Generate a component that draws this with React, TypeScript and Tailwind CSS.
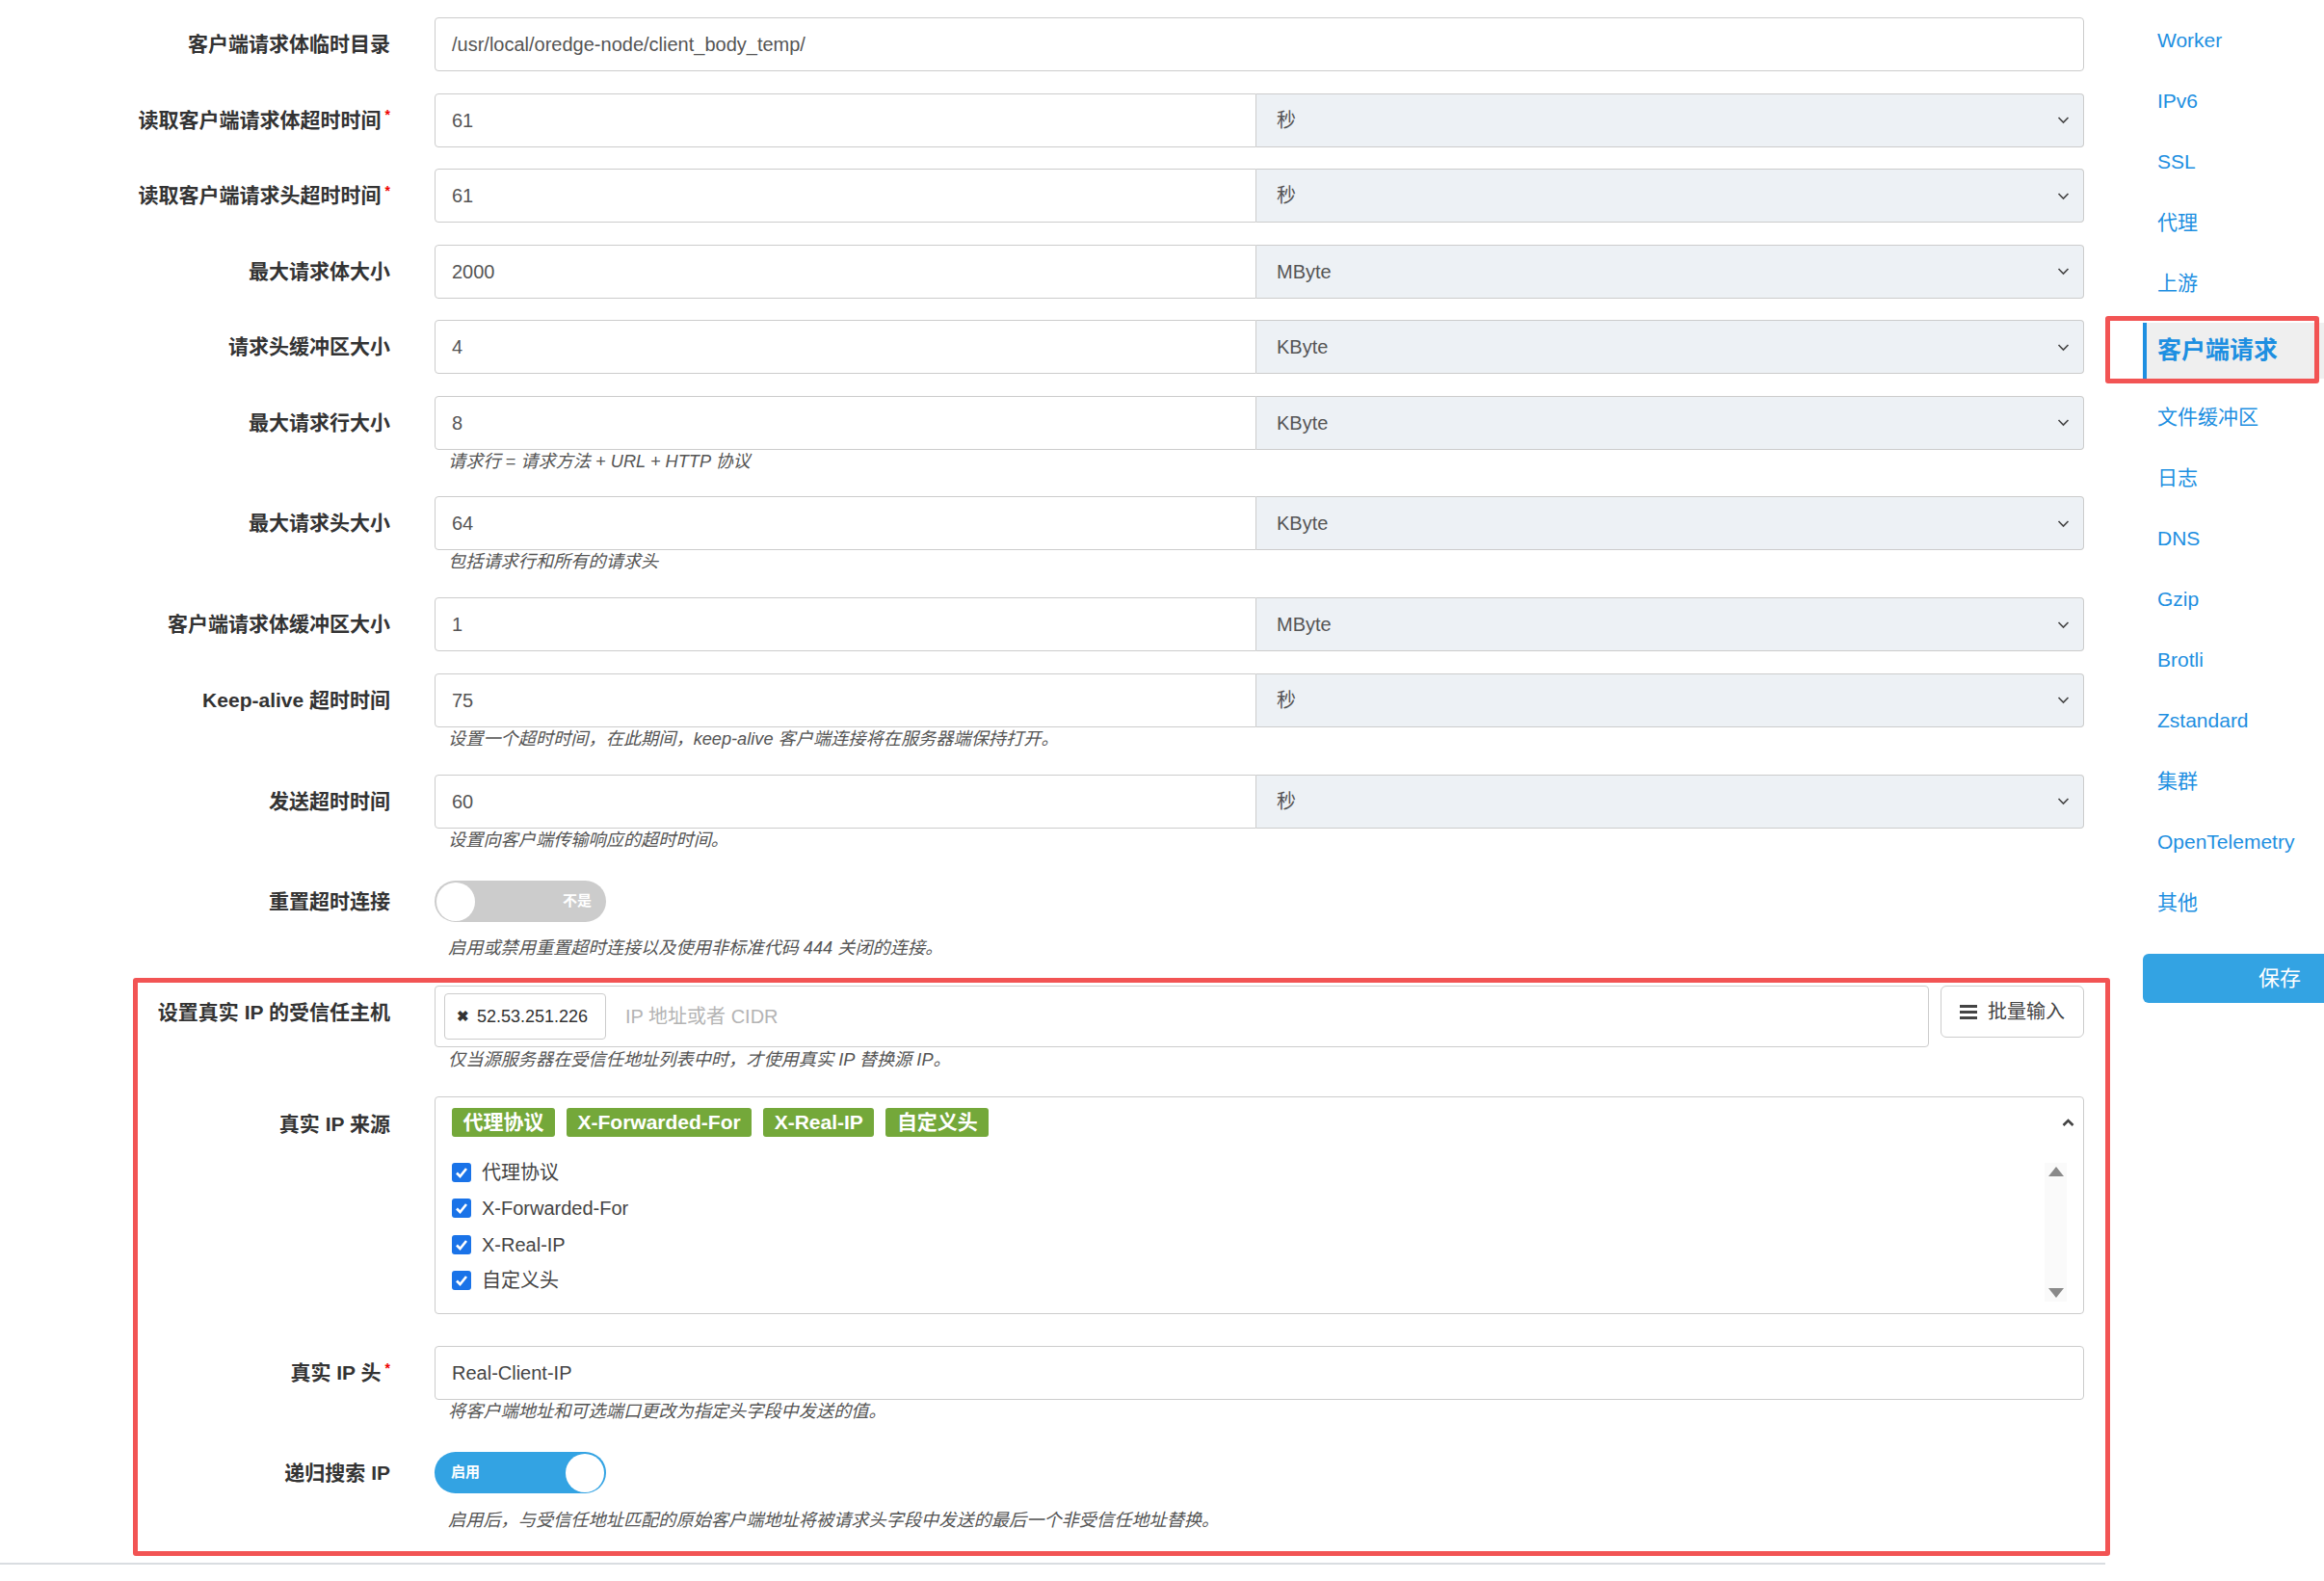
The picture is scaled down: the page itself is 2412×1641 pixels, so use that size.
import { ReactNode } from "react";

const FONT = "font-['Liberation_Sans','Noto_Sans_CJK_SC',sans-serif]";

const Chevron = ({ up = false }: { up?: boolean }) => (
	<svg width="13" height="9" viewBox="0 0 13 9" className={up ? "rotate-180" : ""}>
		<polyline points="1.5,2 6.5,7 11.5,2" fill="none" stroke="#444" strokeWidth={up ? 2.6 : 1.6} />
	</svg>
);

const Check = () => (
	<svg width="20" height="20" viewBox="0 0 20 20" className="shrink-0">
		<rect x="0" y="0" width="20" height="20" rx="3" fill="#1a73e8" />
		<polyline points="5,10.5 8.5,14 15,6" fill="none" stroke="#fff" strokeWidth="2.6" />
	</svg>
);

const Help = ({ children }: { children: ReactNode }) => (
	<div className="pl-[14px] text-[18.2px] leading-[24px] italic text-[#555]">{children}</div>
);

const Label = ({ text, required, w, h = "h-[56px]" }: { text: string; required?: boolean; w: string; h?: string }) => (
	<div className={`${w} ${h} shrink-0 flex items-center justify-end text-[21px] font-bold text-[#333]`}>
		{text}
		{required && <span className="ml-[4px] -mt-[10px] text-[14px] text-[#e00]">*</span>}
	</div>
);

const Row = ({
	label,
	required,
	help,
	w = "w-[405px]",
	mb = "mb-[22.5px]",
	children,
}: {
	label: string;
	required?: boolean;
	help?: ReactNode;
	w?: string;
	mb?: string;
	children: ReactNode;
}) => (
	<div className={`flex items-start ${mb}`}>
		<Label text={label} required={required} w={w} />
		<div className="ml-[46px] w-[1712px]">
			{children}
			{help && <Help>{help}</Help>}
		</div>
	</div>
);

const UnitInput = ({ value, unit }: { value: string; unit: string }) => (
	<div className="flex h-[56px] text-[20px] text-[#555]">
		<div className="w-[853px] border border-[#cccccc] rounded-l-[4px] flex items-center pl-[17px]">{value}</div>
		<div className="flex-1 border border-l-0 border-[#cccccc] rounded-r-[4px] bg-[#edf1f5] flex items-center justify-between pl-[21px] pr-[14px]">
			<span>{unit}</span>
			<Chevron />
		</div>
	</div>
);

const Toggle = ({ on, text }: { on: boolean; text: string }) =>
	on ? (
		<div className="w-[178px] h-[43px] rounded-full bg-[#33a3e3] flex items-center justify-between pl-[17px] pr-[2px]">
			<span className="text-white font-bold text-[15px]">{text}</span>
			<span className="w-[40px] h-[40px] rounded-full bg-white" />
		</div>
	) : (
		<div className="w-[178px] h-[43px] rounded-full bg-[#cccccc] flex items-center justify-between pl-[2px] pr-[15px]">
			<span className="w-[40px] h-[40px] rounded-full bg-white" />
			<span className="text-white font-bold text-[15px]">{text}</span>
		</div>
	);

const sources = ["代理协议", "X-Forwarded-For", "X-Real-IP", "自定义头"];

const navItems = ["Worker", "IPv6", "SSL", "代理", "上游", "客户端请求", "文件缓冲区", "日志", "DNS", "Gzip", "Brotli", "Zstandard", "集群", "OpenTelemetry", "其他"];

export default function App() {
	return (
		<div className={`${FONT} w-[2412px] h-[1641px] overflow-hidden bg-white flex`}>
			<main className="w-[2224px] shrink-0 pt-[18px]">
				<Row label="客户端请求体临时目录">
					<div className="h-[56px] border border-[#cccccc] rounded-[4px] flex items-center pl-[17px] text-[20px] text-[#555]">
						/usr/local/oredge-node/client_body_temp/
					</div>
				</Row>
				<Row label="读取客户端请求体超时时间" required>
					<UnitInput value="61" unit="秒" />
				</Row>
				<Row label="读取客户端请求头超时时间" required>
					<UnitInput value="61" unit="秒" />
				</Row>
				<Row label="最大请求体大小">
					<UnitInput value="2000" unit="MByte" />
				</Row>
				<Row label="请求头缓冲区大小">
					<UnitInput value="4" unit="KByte" />
				</Row>
				<Row label="最大请求行大小" help="请求行 = 请求方法 + URL + HTTP 协议" mb="mb-[24.5px]">
					<UnitInput value="8" unit="KByte" />
				</Row>
				<Row label="最大请求头大小" help="包括请求行和所有的请求头" mb="mb-[25px]">
					<UnitInput value="64" unit="KByte" />
				</Row>
				<Row label="客户端请求体缓冲区大小">
					<UnitInput value="1" unit="MByte" />
				</Row>
				<Row label="Keep-alive 超时时间" help="设置一个超时时间，在此期间，keep-alive 客户端连接将在服务器端保持打开。" mb="mb-[25px]">
					<UnitInput value="75" unit="秒" />
				</Row>
				<Row label="发送超时时间" help="设置向客户端传输响应的超时时间。" mb="mb-[30.5px]">
					<UnitInput value="60" unit="秒" />
				</Row>

				<div className="flex items-start">
					<Label text="重置超时连接" w="w-[405px]" h="h-[43px]" />
					<div className="ml-[46px] w-[1712px]">
						<Toggle on={false} text="不是" />
						<div className="mt-[15px]">
							<Help>启用或禁用重置超时连接以及使用非标准代码 444 关闭的连接。</Help>
						</div>
					</div>
				</div>

				<section className="mt-[19px] ml-[138px] w-[2052px] border-[5px] border-[#f25454] rounded-[3px] pt-[3px] pb-[20px] pr-[22px]">
					<div className="flex items-start">
						<div className="w-[262px] shrink-0 pt-[12px] text-right text-[21px] font-bold text-[#333]">设置真实 IP 的受信任主机</div>
						<div className="ml-[46px] w-[1712px]">
							<div className="flex items-start gap-[12px]">
								<div className="flex-1 h-[64px] border border-[#cccccc] rounded-[4px] flex items-center pl-[9px]">
									<div className="h-[48px] w-[168px] border border-[#cccccc] rounded-[4px] flex items-center pl-[12px] gap-[8px] text-[18px] text-[#333]">
										<span className="text-[15px] font-bold text-[#333]">✖</span>
										52.53.251.226
									</div>
									<span className="ml-[20px] text-[20px] text-[#b4b4b4]">IP 地址或者 CIDR</span>
								</div>
								<button className="w-[149px] h-[54px] border border-[#cccccc] rounded-[6px] flex items-center justify-center gap-[11px] text-[20px] text-[#444]">
									<svg width="18" height="15" viewBox="0 0 18 15">
										<rect x="0" y="0" width="18" height="3" fill="#444" />
										<rect x="0" y="6" width="18" height="3" fill="#444" />
										<rect x="0" y="12" width="18" height="3" fill="#444" />
									</svg>
									批量输入
								</button>
							</div>
							<div className="mt-[1px]">
								<Help>仅当源服务器在受信任地址列表中时，才使用真实 IP 替换源 IP。</Help>
							</div>
						</div>
					</div>

					<div className="flex items-start mt-[26px]">
						<div className="w-[262px] shrink-0 pt-[13px] text-right text-[21px] font-bold text-[#333]">真实 IP 来源</div>
						<div className="ml-[46px] w-[1712px] h-[226px] border border-[#cccccc] rounded-[4px] flex flex-col pl-[17px]">
							<div className="flex items-center justify-between mt-[11px] pr-[9px]">
								<div className="flex gap-[12px]">
									{sources.map(s => (
										<span key={s} className="h-[30px] px-[11.5px] rounded-[3px] bg-[#74a83a] text-white font-bold text-[21px] flex items-center">
											{s}
										</span>
									))}
								</div>
								<Chevron up />
							</div>
							<div className="flex flex-1 mt-[18px] pb-[12px] pr-[17px]">
								<ul className="flex-1 flex flex-col">
									{sources.map(s => (
										<li key={s} className="h-[37.5px] flex items-center gap-[11px] text-[20px] text-[#444]">
											<Check />
											{s}
										</li>
									))}
								</ul>
								<div className="w-[23px] mt-[9px] bg-[#fafafa] flex flex-col items-center justify-between py-[4px]">
									<span className="w-0 h-0 border-x-[8px] border-x-transparent border-b-[10px] border-b-[#8a8a8a]" />
									<span className="w-0 h-0 border-x-[8px] border-x-transparent border-t-[10px] border-t-[#8a8a8a]" />
								</div>
							</div>
						</div>
					</div>

					<div className="flex items-start mt-[33px]">
						<Label text="真实 IP 头" required w="w-[262px]" />
						<div className="ml-[46px] w-[1712px]">
							<div className="h-[56px] border border-[#cccccc] rounded-[4px] flex items-center pl-[17px] text-[20px] text-[#444]">Real-Client-IP</div>
							<Help>将客户端地址和可选端口更改为指定头字段中发送的值。</Help>
						</div>
					</div>

					<div className="flex items-start mt-[30px]">
						<Label text="递归搜索 IP" w="w-[262px]" h="h-[43px]" />
						<div className="ml-[46px] w-[1712px]">
							<Toggle on text="启用" />
							<div className="mt-[16px]">
								<Help>启用后，与受信任地址匹配的原始客户端地址将被请求头字段中发送的最后一个非受信任地址替换。</Help>
							</div>
						</div>
					</div>
				</section>
				<div className="mt-[7px] h-[2px] w-[2185px] bg-[#d9dde1]" />
			</main>

			<nav className="w-[284px] shrink-0 pt-[10px] flex flex-col">
				{navItems.map(item =>
					item === "客户端请求" ? (
						<div key={item} className="relative mt-[10px] mb-[8px] h-[58px] bg-[#efefef] border-l-[4px] border-[#1e8fe1] pl-[11px] flex items-center text-[25px] font-bold text-[#1e8fe1]">
							{item}
							<span className="absolute -left-[43px] -top-[7px] -bottom-[5px] w-[222px] border-[5px] border-[#f25454] rounded-[3px]" />
						</div>
					) : (
						<a key={item} className="h-[63px] pl-[15px] flex items-center text-[21px] text-[#1e8fe1]">
							{item}
						</a>
					)
				)}
				<button className="mt-[22px] h-[51px] w-[284px] rounded-[6px] bg-[#33a3e3] text-white text-[22px]">保存</button>
			</nav>
		</div>
	);
}
